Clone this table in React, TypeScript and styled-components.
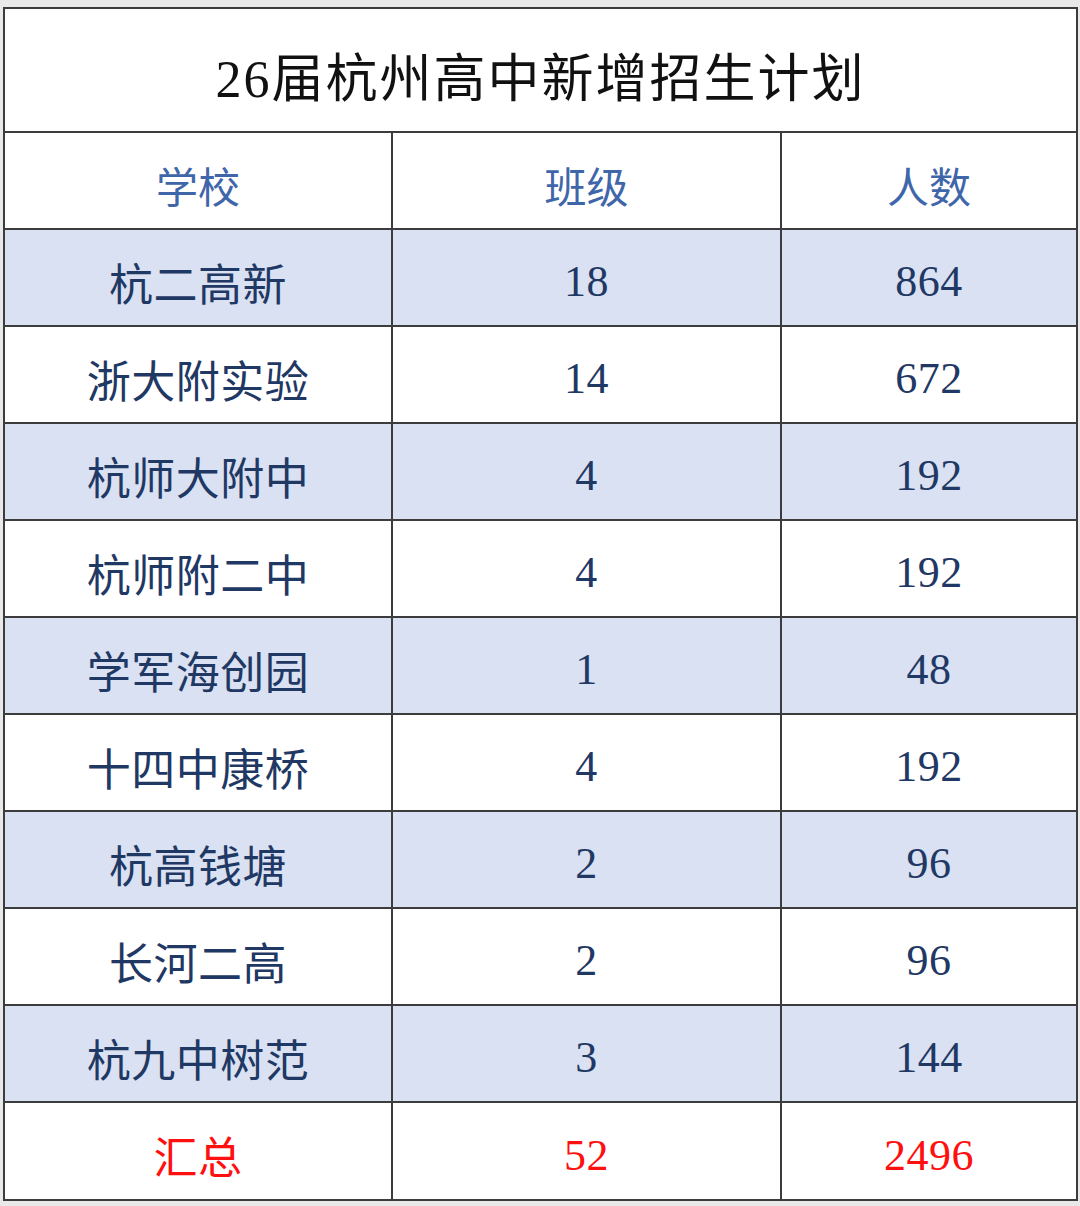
import React from 'react'
import styled, { createGlobalStyle } from 'styled-components'

const GlobalStyle = createGlobalStyle`
  html, body {
    margin: 0;
    padding: 0;
    background: #e9e9e9;
  }
  body {
    font-family: "Liberation Serif", "Noto Sans CJK SC", serif;
  }
`

const rows = [
  { school: '杭二高新', classes: 18, students: 864 },
  { school: '浙大附实验', classes: 14, students: 672 },
  { school: '杭师大附中', classes: 4, students: 192 },
  { school: '杭师附二中', classes: 4, students: 192 },
  { school: '学军海创园', classes: 1, students: 48 },
  { school: '十四中康桥', classes: 4, students: 192 },
  { school: '杭高钱塘', classes: 2, students: 96 },
  { school: '长河二高', classes: 2, students: 96 },
  { school: '杭九中树范', classes: 3, students: 144 },
]

const App = () => {
  const totalClasses = rows.reduce((acc, r) => acc + r.classes, 0)
  const totalStudents = rows.reduce((acc, r) => acc + r.students, 0)
  return (
    <>
      <GlobalStyle />
      <Page>
        <Sheet>
          <colgroup>
            <col style={{ width: 388 }} />
            <col style={{ width: 389 }} />
            <col />
          </colgroup>
          <tbody>
            <TitleRow>
              <TitleCell colSpan={3}>26届杭州高中新增招生计划</TitleCell>
            </TitleRow>
            <Row>
              <HeadCell>学校</HeadCell>
              <HeadCell>班级</HeadCell>
              <HeadCell>人数</HeadCell>
            </Row>
            {rows.map((r, i) => (
              <Row key={r.school} $shaded={i % 2 === 0}>
                <Cell>{r.school}</Cell>
                <Cell>{r.classes}</Cell>
                <Cell>{r.students}</Cell>
              </Row>
            ))}
            <Row $tall>
              <TotalCell>汇总</TotalCell>
              <TotalCell>{totalClasses}</TotalCell>
              <TotalCell>{totalStudents}</TotalCell>
            </Row>
          </tbody>
        </Sheet>
      </Page>
    </>
  )
}

export default App

const Page = styled.div`
  padding: 7px 2px 5px 3px;
  height: 1206px;
  box-sizing: border-box;
`

const Sheet = styled.table`
  width: 1075px;
  border-collapse: collapse;
  table-layout: fixed;
  background: #ffffff;
  border: 2px solid #3c3c3c;
  td {
    border: 2px solid #3c3c3c;
    text-align: center;
    vertical-align: middle;
    padding: 8px 0 0 0;
  }
`

const TitleRow = styled.tr`
  height: 124px;
`

const TitleCell = styled.td`
  font-size: 52px;
  color: #111111;
  letter-spacing: 2px;
`

const Row = styled.tr<{ $shaded?: boolean; $tall?: boolean }>`
  height: ${(p) => (p.$tall ? '98px' : '97px')};
  background: ${(p) => (p.$shaded ? '#d9e1f2' : '#ffffff')};
`

const HeadCell = styled.td`
  font-size: 42px;
  color: #4066aa;
`

const Cell = styled.td`
  font-size: 44px;
  color: #1f3864;
  letter-spacing: 0.5px;
`

const TotalCell = styled.td`
  font-size: 44px;
  color: #ff1010;
  letter-spacing: 0.5px;
`
